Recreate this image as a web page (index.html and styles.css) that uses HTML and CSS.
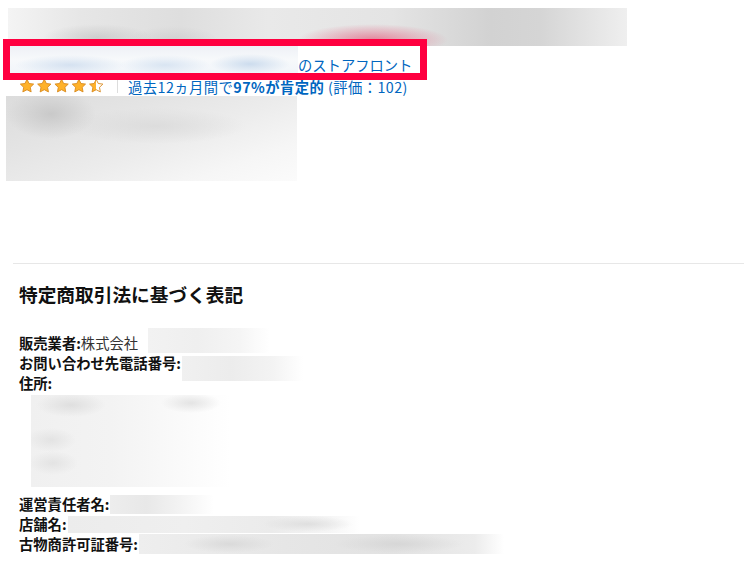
FILE: index.html
```html
<!DOCTYPE html>
<html>
<head>
  <meta charset="UTF-8">
  <title>特定商取引法に基づく表記</title>
  <link rel="stylesheet" href="styles.css">
</head>
<body>
  <div class="page">
    <section class="seller">
      <div class="redacted banner"></div>

      <div class="storefront">
        <span class="redacted seller-name"></span>
        <a class="storefront-link" href="#">のストアフロント</a>
      </div>

      <div class="rating">
        <svg class="stars" viewBox="0 0 87 16" width="87" height="16">
          <defs>
            <path id="star" d="M8 1.3l2.05 4.2 4.6.6-3.35 3.2.85 4.6L8 11.7l-4.15 2.2.85-4.6L1.35 6.1l4.6-.6z"/>
            <linearGradient id="half" x1="0" x2="1" y1="0" y2="0">
              <stop offset="50%" stop-color="#ffb22a"/>
              <stop offset="50%" stop-color="#fff"/>
            </linearGradient>
          </defs>
          <use href="#star" x="0" class="star-full"/>
          <use href="#star" x="17.3" class="star-full"/>
          <use href="#star" x="34.6" class="star-full"/>
          <use href="#star" x="51.9" class="star-full"/>
          <use href="#star" x="69.2" class="star-half"/>
        </svg>
        <span class="rating-sep"></span>
        <a class="rating-text" href="#">過去12ヵ月間で<b>97%が肯定的</b> (評価：102)</a>
      </div>

      <div class="redacted about"></div>
    </section>

    <hr class="divider">

    <section class="legal">
      <h2 class="legal-title">特定商取引法に基づく表記</h2>

      <div class="legal-row">
        <span class="label">販売業者:</span><span class="value">株式会社</span>
        <span class="redacted r-company"></span>
      </div>
      <div class="legal-row">
        <span class="label">お問い合わせ先電話番号:</span>
        <span class="redacted r-phone"></span>
      </div>
      <div class="legal-row">
        <span class="label">住所:</span>
      </div>
      <div class="redacted address"></div>
      <div class="legal-row">
        <span class="label">運営責任者名:</span>
        <span class="redacted r-manager"></span>
      </div>
      <div class="legal-row">
        <span class="label">店舗名:</span>
        <span class="redacted r-shop"></span>
      </div>
      <div class="legal-row">
        <span class="label">古物商許可証番号:</span>
        <span class="redacted r-license"></span>
      </div>
    </section>
  </div>
</body>
</html>
```

FILE: styles.css
```css
* {
  box-sizing: border-box;
}

body {
  margin: 0;
  padding: 0;
  background: #fff;
  color: #111;
  font-family: "Noto Sans CJK JP", "Noto Sans", sans-serif;
  overflow: hidden;
}

.page {
  width: 744px;
}

/* Blurred-out content */
.redacted {
  display: block;
}

.seller {
  padding: 8px 0 0 8px;
}

.banner {
  width: 619px;
  height: 38px;
  background:
    radial-gradient(ellipse 75px 16px at 365px 32px, rgba(226, 92, 124, 0.7), rgba(226, 92, 124, 0) 100%),
    radial-gradient(ellipse 55px 14px at 90px 30px, rgba(190, 190, 190, 0.6), rgba(190, 190, 190, 0) 100%),
    radial-gradient(ellipse 45px 14px at 165px 32px, rgba(200, 200, 200, 0.6), rgba(200, 200, 200, 0) 100%),
    linear-gradient(90deg, #f4f4f4 0%, #e6e6e6 12%, #dedede 28%, #e9e9e9 42%, #e4e4e4 62%, #d2d2d2 78%, #d5d5d5 86%, #efefef 100%);
}

/* Storefront line, with the red highlight frame */
.storefront {
  display: flex;
  align-items: flex-end;
  width: 410px;
  height: 27px;
  margin-left: 2px;
  background: #fff;
  outline: 7px solid #ff0040;
}

.seller-name {
  width: 288px;
  height: 27px;
  background:
    radial-gradient(ellipse 55px 10px at 60px 19px, rgba(205, 220, 238, 0.8), rgba(205, 220, 238, 0) 100%),
    radial-gradient(ellipse 45px 10px at 155px 19px, rgba(210, 224, 240, 0.8), rgba(210, 224, 240, 0) 100%),
    radial-gradient(ellipse 40px 10px at 240px 18px, rgba(200, 217, 236, 0.9), rgba(200, 217, 236, 0) 100%),
    linear-gradient(180deg, #eef1f6 0%, #f7f9fb 50%, #f1f5fa 100%);
}

.storefront-link {
  color: #0066c0;
  font-size: 14.3px;
  line-height: 17px;
  text-decoration: none;
}

.rating {
  display: flex;
  align-items: center;
  height: 20px;
  margin: 3px 0 0 11px;
}

.stars {
  display: block;
}

.star-full {
  fill: #ffb22a;
  stroke: #d88a1f;
  stroke-width: 0.9;
}

.star-half {
  fill: url(#half);
  stroke: #d88a1f;
  stroke-width: 0.9;
}

.rating-sep {
  width: 1px;
  height: 14px;
  background: #ddd;
  margin: 0 10px 0 11px;
}

.rating-text {
  color: #0066c0;
  font-size: 14.3px;
  letter-spacing: 0.45px;
  text-decoration: none;
}

.rating-text b {
  font-weight: 700;
}

.about {
  width: 291px;
  height: 85px;
  margin: 0 0 0 -2px;
  background:
    radial-gradient(ellipse 45px 25px at 45px 18px, rgba(195, 195, 195, 0.8), rgba(195, 195, 195, 0) 100%),
    radial-gradient(ellipse 90px 18px at 150px 30px, rgba(215, 215, 215, 0.7), rgba(215, 215, 215, 0) 100%),
    linear-gradient(160deg, #dcdcdc 0%, #e4e4e4 30%, #ececec 55%, #f6f6f6 80%, #fbfbfb 100%);
}

.divider {
  margin: 82px 0 0 13px;
  border: 0;
  border-top: 1px solid #e7e7e7;
  height: 0;
}

.legal {
  padding-left: 19px;
}

.legal-title {
  margin: 16px 0 0;
  font-size: 18.7px;
  font-weight: 700;
  line-height: 28px;
  color: #111;
}

.legal-row {
  display: flex;
  align-items: center;
  height: 20px;
  font-size: 14.3px;
  line-height: 20px;
}

.legal-title + .legal-row {
  margin-top: 25px;
}

.label {
  font-weight: 700;
}

.value {
  color: #333;
}

.r-company {
  width: 122px;
  height: 25px;
  margin: -6px 0 -1px 10px;
  background: linear-gradient(90deg, #f2f2f2 0%, #efefef 40%, #f5f5f5 75%, #fff 100%);
}

.r-phone {
  width: 121px;
  height: 25px;
  margin: 3px 0 -8px 1px;
  background: linear-gradient(90deg, #f0f0f0 0%, #ececec 40%, #f3f3f3 75%, #fff 100%);
}

.address {
  width: 199px;
  height: 92px;
  margin: 2px 0 7px 12px;
  background:
    radial-gradient(ellipse 35px 12px at 40px 10px, rgba(210, 210, 210, 0.6), rgba(210, 210, 210, 0) 100%),
    radial-gradient(ellipse 30px 10px at 160px 8px, rgba(212, 212, 212, 0.6), rgba(212, 212, 212, 0) 100%),
    radial-gradient(ellipse 25px 12px at 20px 45px, rgba(218, 218, 218, 0.6), rgba(218, 218, 218, 0) 100%),
    radial-gradient(ellipse 25px 12px at 22px 68px, rgba(218, 218, 218, 0.6), rgba(218, 218, 218, 0) 100%),
    linear-gradient(90deg, #f0f0f0 0%, #f3f3f3 40%, #fafafa 75%, #fff 100%);
}

.r-manager {
  width: 104px;
  height: 19px;
  margin-left: 1px;
  background: linear-gradient(90deg, #ededed 0%, #e8e8e8 35%, #f4f4f4 70%, #fff 100%);
}

.r-shop {
  width: 292px;
  height: 17px;
  margin-left: 1px;
  background:
    radial-gradient(ellipse 45px 8px at 240px 8px, rgba(210, 210, 210, 0.6), rgba(210, 210, 210, 0) 100%),
    linear-gradient(90deg, #ececec 0%, #efefef 40%, #ebebeb 70%, #f6f6f6 90%, #fff 100%);
}

.r-license {
  width: 365px;
  height: 21px;
  margin-left: 1px;
  background:
    radial-gradient(ellipse 45px 9px at 90px 10px, rgba(205, 205, 205, 0.55), rgba(205, 205, 205, 0) 100%),
    radial-gradient(ellipse 65px 9px at 260px 10px, rgba(205, 205, 205, 0.55), rgba(205, 205, 205, 0) 100%),
    linear-gradient(90deg, #eeeeee 0%, #e6e6e6 40%, #e2e2e2 70%, #ececec 92%, #fff 100%);
}
```
